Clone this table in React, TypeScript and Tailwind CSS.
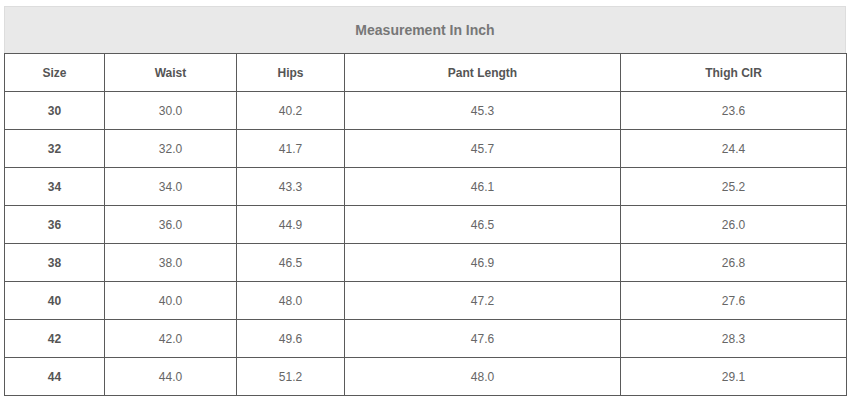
import React from 'react'

const rows = [
  ['30', '30.0', '40.2', '45.3', '23.6'],
  ['32', '32.0', '41.7', '45.7', '24.4'],
  ['34', '34.0', '43.3', '46.1', '25.2'],
  ['36', '36.0', '44.9', '46.5', '26.0'],
  ['38', '38.0', '46.5', '46.9', '26.8'],
  ['40', '40.0', '48.0', '47.2', '27.6'],
  ['42', '42.0', '49.6', '47.6', '28.3'],
  ['44', '44.0', '51.2', '48.0', '29.1'],
]

const headers = ['Size', 'Waist', 'Hips', 'Pant Length', 'Thigh CIR']
const widths = ['w-[100px]', 'w-[132px]', 'w-[108px]', 'w-[276px]', 'w-[226px]']

export default function App() {
  return (
    <div className="w-[851px] h-[402px] bg-white pt-[6px] pl-[4px] font-['Liberation_Sans',Arial,sans-serif]">
      <div className="w-[842px]">
        <div className="h-[47px] bg-[#e9e9e9] border border-b-0 border-[#dddddd] flex items-center justify-center text-[14px] font-bold text-[#777777]">
          Measurement In Inch
        </div>
        <table className="border-collapse table-fixed w-[842px] text-[12px] text-[#666666]">
          <thead>
            <tr className="h-[38px]">
              {headers.map((h, i) => (
                <th
                  key={h}
                  className={`${widths[i]} border border-[#5a5a5a] font-bold text-[#555555] text-center p-0`}
                >
                  {h}
                </th>
              ))}
            </tr>
          </thead>
          <tbody>
            {rows.map(r => (
              <tr key={r[0]} className="h-[38px]">
                {r.map((c, i) => (
                  <td
                    key={i}
                    className={`border border-[#5a5a5a] text-center p-0 ${i === 0 ? 'font-bold text-[#555555]' : ''}`}
                  >
                    {c}
                  </td>
                ))}
              </tr>
            ))}
          </tbody>
        </table>
      </div>
    </div>
  )
}
